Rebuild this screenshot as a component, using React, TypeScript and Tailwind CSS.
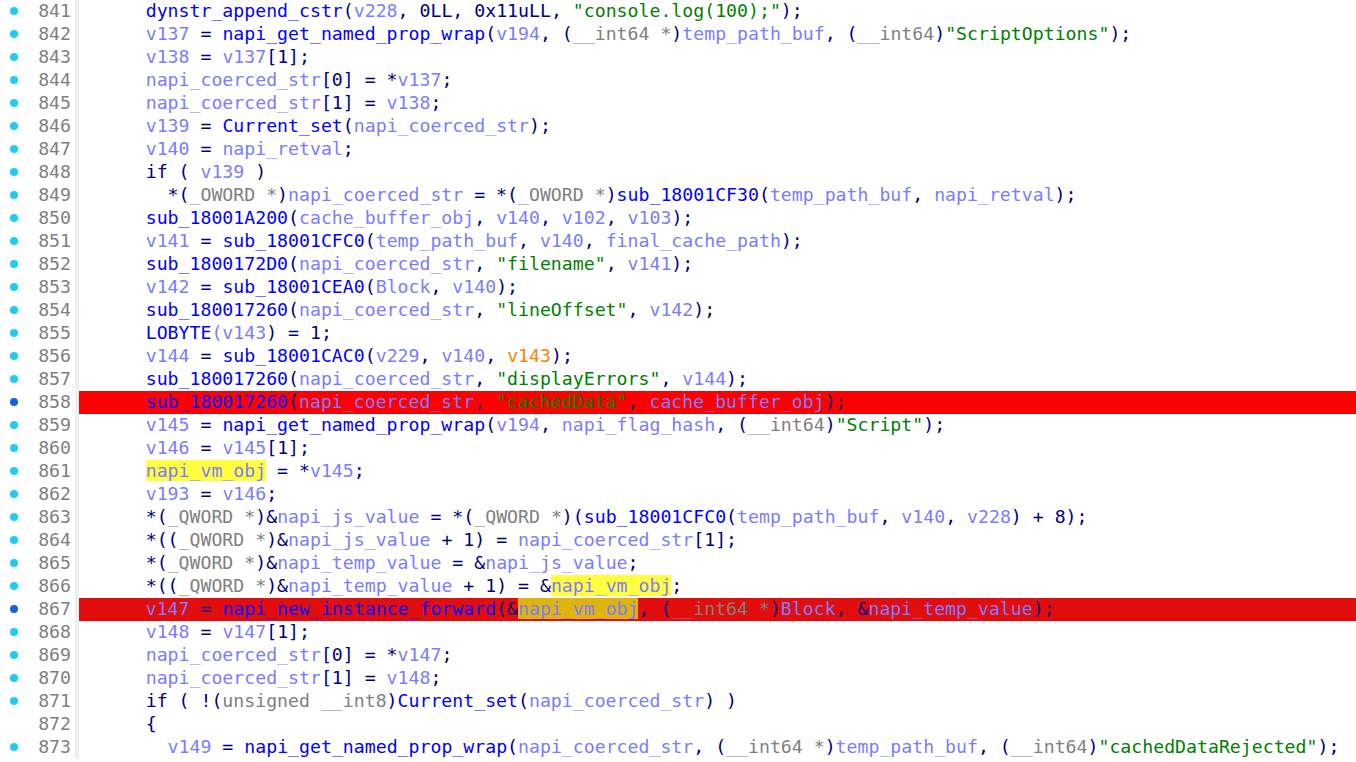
type Kind = "f" | "v" | "p" | "s" | "t" | "n" | "o" | "y" | "yd";
type Tok = [Kind, string];

const colors: Record<Kind, string> = {
  f: "text-[#0000ff]",
  v: "text-[#7c7cff]",
  p: "text-[#000080]",
  s: "text-[#008000]",
  t: "text-[#808080]",
  n: "text-[#000080]",
  o: "text-[#ff8000]",
  y: "text-[#7c7cff] bg-[#ffff40]",
  yd: "text-[#7c7cff] bg-[#e0b40c]",
};

type Line = { no: number; dot?: "c" | "b"; hl?: "red" | "red2"; toks: Tok[] };

const I = "      ";
const I2 = "        ";

const lines: Line[] = [
  { no: 841, dot: "c", toks: [["p", I], ["f", "dynstr_append_cstr"], ["p", "("], ["v", "v228"], ["p", ", "], ["n", "0LL"], ["p", ", "], ["n", "0x11uLL"], ["p", ", "], ["s", "\"console.log(100);\""], ["p", ");"]] },
  { no: 842, dot: "c", toks: [["p", I], ["v", "v137"], ["p", " = "], ["f", "napi_get_named_prop_wrap"], ["p", "("], ["v", "v194"], ["p", ", ("], ["t", "__int64 *"], ["p", ")"], ["v", "temp_path_buf"], ["p", ", ("], ["t", "__int64"], ["p", ")"], ["s", "\"ScriptOptions\""], ["p", ");"]] },
  { no: 843, dot: "c", toks: [["p", I], ["v", "v138"], ["p", " = "], ["v", "v137"], ["p", "[1];"]] },
  { no: 844, dot: "c", toks: [["p", I], ["v", "napi_coerced_str"], ["p", "[0] = *"], ["v", "v137"], ["p", ";"]] },
  { no: 845, dot: "c", toks: [["p", I], ["v", "napi_coerced_str"], ["p", "[1] = "], ["v", "v138"], ["p", ";"]] },
  { no: 846, dot: "c", toks: [["p", I], ["v", "v139"], ["p", " = "], ["f", "Current_set"], ["p", "("], ["v", "napi_coerced_str"], ["p", ");"]] },
  { no: 847, dot: "c", toks: [["p", I], ["v", "v140"], ["p", " = "], ["v", "napi_retval"], ["p", ";"]] },
  { no: 848, dot: "c", toks: [["p", I + "if ( "], ["v", "v139"], ["p", " )"]] },
  { no: 849, dot: "c", toks: [["p", I2 + "*("], ["t", "_OWORD *"], ["p", ")"], ["v", "napi_coerced_str"], ["p", " = *("], ["t", "_OWORD *"], ["p", ")"], ["f", "sub_18001CF30"], ["p", "("], ["v", "temp_path_buf"], ["p", ", "], ["v", "napi_retval"], ["p", ");"]] },
  { no: 850, dot: "c", toks: [["p", I], ["f", "sub_18001A200"], ["p", "("], ["v", "cache_buffer_obj"], ["p", ", "], ["v", "v140"], ["p", ", "], ["v", "v102"], ["p", ", "], ["v", "v103"], ["p", ");"]] },
  { no: 851, dot: "c", toks: [["p", I], ["v", "v141"], ["p", " = "], ["f", "sub_18001CFC0"], ["p", "("], ["v", "temp_path_buf"], ["p", ", "], ["v", "v140"], ["p", ", "], ["v", "final_cache_path"], ["p", ");"]] },
  { no: 852, dot: "c", toks: [["p", I], ["f", "sub_1800172D0"], ["p", "("], ["v", "napi_coerced_str"], ["p", ", "], ["s", "\"filename\""], ["p", ", "], ["v", "v141"], ["p", ");"]] },
  { no: 853, dot: "c", toks: [["p", I], ["v", "v142"], ["p", " = "], ["f", "sub_18001CEA0"], ["p", "("], ["v", "Block"], ["p", ", "], ["v", "v140"], ["p", ");"]] },
  { no: 854, dot: "c", toks: [["p", I], ["f", "sub_180017260"], ["p", "("], ["v", "napi_coerced_str"], ["p", ", "], ["s", "\"lineOffset\""], ["p", ", "], ["v", "v142"], ["p", ");"]] },
  { no: 855, dot: "c", toks: [["p", I], ["f", "LOBYTE"], ["v", "("], ["v", "v143"], ["p", ") = 1;"]] },
  { no: 856, dot: "c", toks: [["p", I], ["v", "v144"], ["p", " = "], ["f", "sub_18001CAC0"], ["p", "("], ["v", "v229"], ["p", ", "], ["v", "v140"], ["p", ", "], ["o", "v143"], ["p", ");"]] },
  { no: 857, dot: "c", toks: [["p", I], ["f", "sub_180017260"], ["p", "("], ["v", "napi_coerced_str"], ["p", ", "], ["s", "\"displayErrors\""], ["p", ", "], ["v", "v144"], ["p", ");"]] },
  { no: 858, dot: "b", hl: "red", toks: [["p", I], ["f", "sub_180017260"], ["p", "("], ["v", "napi_coerced_str"], ["p", ", "], ["s", "\"cachedData\""], ["p", ", "], ["v", "cache_buffer_obj"], ["p", ");"]] },
  { no: 859, dot: "c", toks: [["p", I], ["v", "v145"], ["p", " = "], ["f", "napi_get_named_prop_wrap"], ["p", "("], ["v", "v194"], ["p", ", "], ["v", "napi_flag_hash"], ["p", ", ("], ["t", "__int64"], ["p", ")"], ["s", "\"Script\""], ["p", ");"]] },
  { no: 860, dot: "c", toks: [["p", I], ["v", "v146"], ["p", " = "], ["v", "v145"], ["p", "[1];"]] },
  { no: 861, dot: "c", toks: [["p", I], ["y", "napi_vm_obj"], ["p", " = *"], ["v", "v145"], ["p", ";"]] },
  { no: 862, dot: "c", toks: [["p", I], ["v", "v193"], ["p", " = "], ["v", "v146"], ["p", ";"]] },
  { no: 863, dot: "c", toks: [["p", I + "*("], ["t", "_QWORD *"], ["p", ")&"], ["v", "napi_js_value"], ["p", " = *("], ["t", "_QWORD *"], ["p", ")("], ["f", "sub_18001CFC0"], ["p", "("], ["v", "temp_path_buf"], ["p", ", "], ["v", "v140"], ["p", ", "], ["v", "v228"], ["p", ") + 8);"]] },
  { no: 864, dot: "c", toks: [["p", I + "*(("], ["t", "_QWORD *"], ["p", ")&"], ["v", "napi_js_value"], ["p", " + 1) = "], ["v", "napi_coerced_str"], ["p", "[1];"]] },
  { no: 865, dot: "c", toks: [["p", I + "*("], ["t", "_QWORD *"], ["p", ")&"], ["v", "napi_temp_value"], ["p", " = &"], ["v", "napi_js_value"], ["p", ";"]] },
  { no: 866, dot: "c", toks: [["p", I + "*(("], ["t", "_QWORD *"], ["p", ")&"], ["v", "napi_temp_value"], ["p", " + 1) = &"], ["y", "napi_vm_obj"], ["p", ";"]] },
  { no: 867, dot: "b", hl: "red2", toks: [["p", I], ["v", "v147"], ["p", " = "], ["f", "napi_new_instance_forward"], ["p", "(&"], ["yd", "napi_vm_obj"], ["p", ", ("], ["t", "__int64 *"], ["p", ")"], ["v", "Block"], ["p", ", &"], ["v", "napi_temp_value"], ["p", ");"]] },
  { no: 868, dot: "c", toks: [["p", I], ["v", "v148"], ["p", " = "], ["v", "v147"], ["p", "[1];"]] },
  { no: 869, dot: "c", toks: [["p", I], ["v", "napi_coerced_str"], ["p", "[0] = *"], ["v", "v147"], ["p", ";"]] },
  { no: 870, dot: "c", toks: [["p", I], ["v", "napi_coerced_str"], ["p", "[1] = "], ["v", "v148"], ["p", ";"]] },
  { no: 871, dot: "c", toks: [["p", I + "if ( !("], ["t", "unsigned __int8"], ["p", ")"], ["f", "Current_set"], ["p", "("], ["v", "napi_coerced_str"], ["p", ") )"]] },
  { no: 872, toks: [["p", I + "{"]] },
  { no: 873, dot: "c", toks: [["p", I2], ["v", "v149"], ["p", " = "], ["f", "napi_get_named_prop_wrap"], ["p", "("], ["v", "napi_coerced_str"], ["p", ", ("], ["t", "__int64 *"], ["p", ")"], ["v", "temp_path_buf"], ["p", ", ("], ["t", "__int64"], ["p", ")"], ["s", "\"cachedDataRejected\""], ["p", ");"]] },
];

const CodeRow = ({ line }: { line: Line }) => {
  const bg = line.hl === "red" ? "bg-[#ff0000]" : line.hl === "red2" ? "bg-[#e20d0d]" : "bg-white";
  return (
    <div className="flex h-[23px] items-stretch">
      {/* gutter: breakpoint dot + line number */}
      <div className="flex w-[75px] shrink-0 items-center pb-[2px]">
        <span
          className={`ml-[10px] h-[8px] w-[8px] rounded-full ${
            line.dot === "c" ? "bg-[#1ccdf5]" : line.dot === "b" ? "bg-[#1560e6]" : "bg-transparent"
          }`}
        />
        <span className="flex-1 pr-[4px] text-right text-[#7f7f7f]">{line.no}</span>
      </div>
      <div className="w-[4px] shrink-0 bg-[#efefef]" />
      <div className={`flex flex-1 items-center whitespace-pre pb-[2px] pl-[1px] ${bg}`}>
        {line.toks.map(([k, t], i) => (
          <span key={i} className={colors[k]}>
            {t}
          </span>
        ))}
      </div>
    </div>
  );
};

export default function App() {
  return (
    <div className="h-[762px] w-[1356px] overflow-hidden bg-white font-['DejaVu_Sans_Mono',monospace] text-[18.2px] leading-[21px]">
      {lines.map((l) => (
        <CodeRow key={l.no} line={l} />
      ))}
    </div>
  );
}
